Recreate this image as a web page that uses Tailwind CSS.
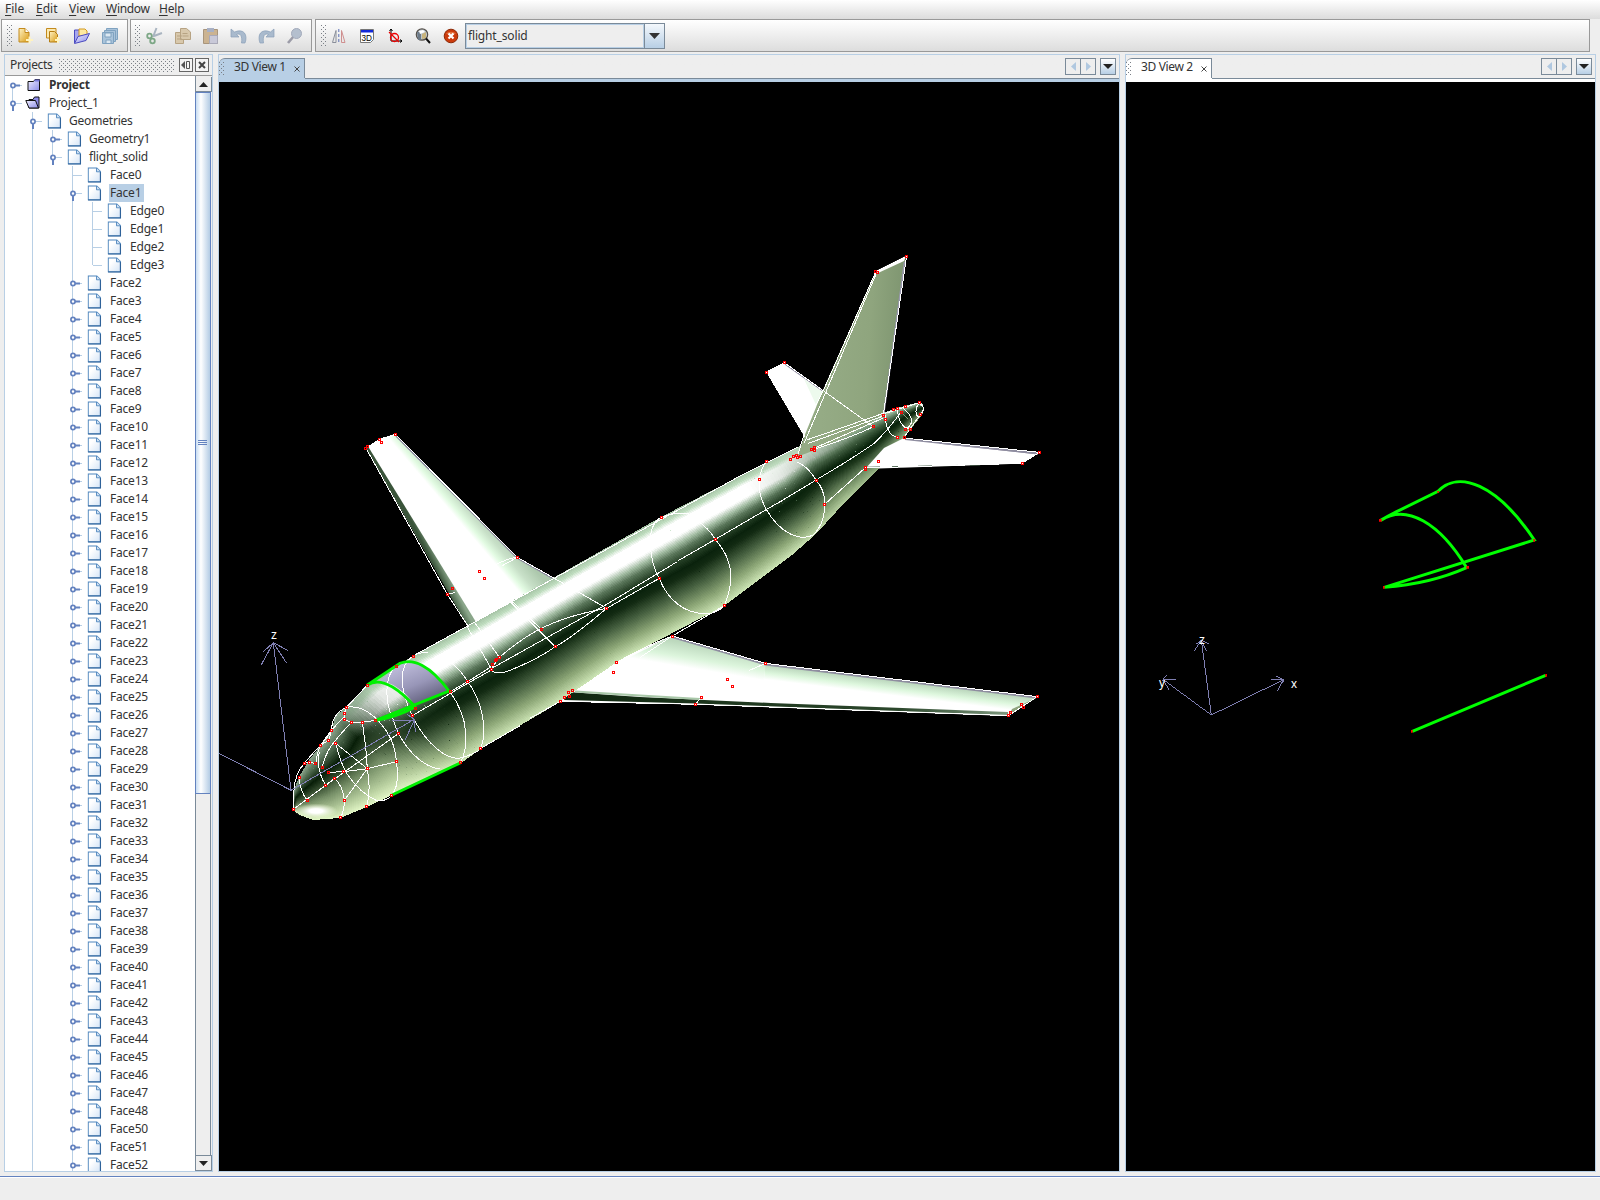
<!DOCTYPE html>
<html lang="en">
<head>
<meta charset="utf-8">
<title>flight_solid</title>
<script src="https://cdn.jsdelivr.net/npm/@tailwindcss/browser@4"></script>
</head>
<body class="w-[1600px] h-[1200px] overflow-hidden bg-[#eeeeee] font-['Noto_Sans',sans-serif] text-[12px] leading-[18px] text-[#333333] flex flex-col">
<svg width="0" height="0" class="absolute">
  <defs>
    <pattern id="dots" width="4" height="4" patternUnits="userSpaceOnUse"><path d="M0 0h1v1H0zM2 2h1v1H2z" fill="#7a7f86"/></pattern>
    <linearGradient id="pg" x1="0" y1="0" x2="1" y2="1"><stop offset=".3" stop-color="#fff"/><stop offset="1" stop-color="#d4e4f6"/></linearGradient>
    <linearGradient id="gold" x1="0" y1="0" x2="1" y2="1"><stop offset="0" stop-color="#fff3c4"/><stop offset="1" stop-color="#d99a12"/></linearGradient>
    <linearGradient id="fold" x1="0" y1="0" x2="1" y2="1"><stop offset="0" stop-color="#f0f0ff"/><stop offset="1" stop-color="#8a8ae8"/></linearGradient>
    <symbol id="page" viewBox="0 0 14 16"><path d="M.7 1h8.600l3.600 3.600v10.200H.7z" fill="url(#pg)" stroke="#4f86bd" stroke-width="1.100"/><path d="M.6 15h12.400V5" fill="none" stroke="#2f6299" stroke-width="1.100"/><path d="M9 1v3.800h4" fill="#cfe0f2" stroke="#4f86bd" stroke-width=".9"/></symbol>
    <symbol id="closed" viewBox="0 0 14 14"><path d="M1 3.500h5.500l1.500-2h4.500v11H1z" fill="url(#fold)" stroke="#111" /><path d="M7.500 1.500h5v2h-5z" fill="#7474d8"/></symbol>
    <symbol id="open" viewBox="0 0 16 14"><path d="M4 3.500h4l1.500-2.500h4.500v11H4z" fill="#8a8ae8" stroke="#111"/><path d="M.8 4.500h9.700l3 7.500H4z" fill="url(#fold)" stroke="#111"/></symbol>
  </defs>
</svg>

<nav class="h-[19px] shrink-0 flex items-start pl-[5px] bg-linear-to-b from-white to-[#dcdcdc]">
  <span class="w-[31px]"><u class="underline-offset-2">F</u>ile</span>
  <span class="w-[33px]"><u class="underline-offset-2">E</u>dit</span>
  <span class="w-[37px]"><u class="underline-offset-2">V</u>iew</span>
  <span class="w-[53px] tracking-[-.3px]"><u class="underline-offset-2">W</u>indow</span>
  <span class="tracking-[-.2px]"><u class="underline-offset-2">H</u>elp</span>
</nav>

<div class="h-[33px] shrink-0 flex gap-[3px] pl-px">
  <div class="w-[127px] border border-[#999] bg-linear-to-b from-white to-[#dddddd] flex items-center pl-[5px]">
    <svg width="6" height="22"><rect width="6" height="22" fill="url(#dots)"/></svg>
    <div class="flex items-center gap-[11px] pl-[4px]">
      <svg width="17" height="18" viewBox="0 0 17 18"><path d="M2 1.500h6l4 4V15H2z" fill="url(#gold)" stroke="#c38a1c"/><path d="M8 1.500v4h4" fill="#fff" stroke="#c38a1c"/><path d="M12.500 9.500v7M9 13h7" stroke="#fff3c0" stroke-width="2"/></svg>
      <svg width="17" height="18" viewBox="0 0 17 18"><path d="M1.500 1.500H11V11H1.500z" fill="#fbe9b0" stroke="#c38a1c"/><path d="M4.500 4.500h5l3 3V15h-8z" fill="url(#gold)" stroke="#b57d12"/><path d="M13 10v6M10 13h6" stroke="#fff3c0" stroke-width="2"/></svg>
      <svg width="17" height="18" viewBox="0 0 17 18"><path d="M1.500 16V3h5l1 2h3v5" fill="#a6a6ee" stroke="#4a4ac0"/><path d="M6 9V2h6l2 2v5z" fill="#ffe9a0" stroke="#d39a20"/><path d="M1.500 16.500 5 9.500l11.500-3-3.500 7z" fill="url(#fold)" stroke="#4a4ac0"/></svg>
      <svg width="17" height="18" viewBox="0 0 17 18" fill="#a9c3da" stroke="#7fa2c0"><path d="M5.500 1.500h11v11h-11z"/><path d="M3.500 3.500h11v11h-11z"/><path d="M1.500 5.500h11v11h-11z"/><path d="M4 6h6v4H4zM5 13h5v3.500H5z" fill="#dce8f2"/></svg>
    </div>
  </div>
  <div class="w-[182px] -ml-px border border-[#999] bg-linear-to-b from-white to-[#dddddd] flex items-center pl-[4px]">
    <svg width="6" height="22"><rect width="6" height="22" fill="url(#dots)"/></svg>
    <div class="flex items-center gap-[11px] pl-[5px]">
      <svg width="17" height="18" viewBox="0 0 17 18" fill="none"><path d="M8 9 16 6M7 10 10.500 1" stroke="#a9b4c0" stroke-width="2"/><circle cx="3.500" cy="9" r="2.300" stroke="#7da786" stroke-width="1.800"/><circle cx="6.500" cy="14" r="2.300" stroke="#7da786" stroke-width="1.800"/></svg>
      <svg width="17" height="18" viewBox="0 0 17 18" stroke="#b7a383" fill="#d8c8ac"><path d="M1.500 5.500h8v11h-8z"/><path d="M6.500 1.500h6l4 3.500v7.500h-10z"/><path d="M3 9h5M3 12h5M8.500 6.500h5M8.500 9h6"/></svg>
      <svg width="17" height="18" viewBox="0 0 17 18"><path d="M1.500 2.500h14v14h-14z" fill="#cbb391" stroke="#a8957c"/><path d="M5 1h7v4H5z" fill="#a8b0c4"/><path d="M7.500 8.500h8v8h-8z" fill="#c9c9d8" stroke="#a9a9b8"/></svg>
      <svg width="17" height="18" viewBox="0 0 17 18"><path d="M1 2v8h8L6.500 7.500c4-2 6 2 5 8.500h3.500c3-8-1-15-10.500-11z" fill="#a9bacd" stroke="#8a9fb8" stroke-width=".7"/></svg>
      <svg width="17" height="18" viewBox="0 0 17 18"><path d="M16 2v8H8l2.500-2.500c-4-2-6 2-5 8.500H2C-1 8 3 1 12.500 5z" fill="#a9bacd" stroke="#8a9fb8" stroke-width=".7"/></svg>
      <svg width="17" height="18" viewBox="0 0 17 18"><path d="M7.500 9.500 2 16" stroke="#9c9ca8" stroke-width="2.600"/><circle cx="10.500" cy="6.500" r="5" fill="#b4bfce" stroke="#a3aabb"/></svg>
    </div>
  </div>
  <div class="w-[1275px] border border-[#999] bg-linear-to-b from-white to-[#dddddd] flex items-center pl-[5px]">
    <svg width="6" height="22"><rect width="6" height="22" fill="url(#dots)"/></svg>
    <div class="flex items-center gap-[12px] pl-[4px]">
      <svg width="16" height="16" viewBox="0 0 16 16" fill="none"><path d="M1.500 14.500h3.500v-12z" stroke="#8a8f9a"/><path d="M14 14.500h-3.500v-12z" stroke="#cf8f8f"/><path d="M7.800 1v15" stroke="#5b6fb5" stroke-dasharray="3 2"/></svg>
      <svg width="16" height="16" viewBox="0 0 16 16"><path d="M1.500 1.500h13v10l-3 3h-10z" fill="#fff" stroke="#777"/><path d="M2 2h12v2.500H2z" fill="#1228d8"/><text x="2.500" y="12.500" font-size="9.500" font-family="Liberation Sans" fill="#000" textLength="10.500" lengthAdjust="spacingAndGlyphs">3D</text></svg>
      <svg width="16" height="16" viewBox="0 0 16 16" fill="none"><path d="M4 1v12h11M2.500 3 4 1l1.500 2M13 11.500l2 1.500-2 1.500" stroke="#000"/><circle cx="7.500" cy="9.500" r="4" stroke="#e00" stroke-width="1.300"/><path d="M2 4l10 10" stroke="#e00" stroke-width="1.300"/></svg>
      <svg width="16" height="16" viewBox="0 0 16 16"><circle cx="7" cy="6.500" r="5.700" fill="#bcc6cf" stroke="#55504a" stroke-width="1.200"/><path d="M2 4h4v8H3z" fill="#6c7a88"/><path d="M7 6l4-2v6l-4 1z" fill="#c9b47c"/><path d="M4 3l4-1 2 2-5 2z" fill="#fff"/><path d="M11 10.500l4 4.500" stroke="#111" stroke-width="2"/></svg>
      <svg width="16" height="16" viewBox="0 0 16 16"><circle cx="8" cy="8" r="6.800" fill="#cc3b0c" stroke="#8c2a08"/><path d="M3 6a5.500 4 0 0 1 10 0z" fill="#e2703c"/><path d="M5.500 5.500l5 5m0-5-5 5" stroke="#fff" stroke-width="2.200"/></svg>
    </div>
    <div class="ml-[6px] w-[200px] h-[26px] border border-[#7a8a99] flex">
      <div class="flex-1 border border-[#b8cfe5] bg-[#eeeeee] pl-[1px] leading-[22px] tracking-[-.15px]">flight_solid</div>
      <div class="w-[20px] border-l border-[#7a8a99] bg-linear-to-b from-[#f4f8fc] to-[#b8cfe5] flex items-center justify-center"><svg width="11" height="6"><path d="M0 0h11L5.500 6z" fill="#333"/></svg></div>
    </div>
  </div>
</div>

<main class="h-[1118px] mt-[2px] pl-[4px] flex shrink-0">
  <section class="w-[209px] border border-[#b8cfe5] bg-white flex flex-col">
    <header class="h-[21px] shrink-0 bg-[#eeeeee] border-b border-[#999] flex items-center pl-[5px]">
      <span class="w-[49px] tracking-[-.3px]">Projects</span>
      <svg width="115" height="13"><rect width="115" height="13" fill="url(#dots)"/></svg>
      <svg class="ml-[5px]" width="14" height="14"><rect x=".5" y=".5" width="13" height="13" fill="#f4f4f4" stroke="#666"/><path d="M6 3v8L2 7z" fill="#555"/><path d="M7.500 3.500h3v7h-3z" fill="none" stroke="#555"/></svg>
      <svg class="ml-[2px]" width="14" height="14"><rect x=".5" y=".5" width="13" height="13" fill="#f4f4f4" stroke="#666"/><path d="M4 4l6 6m0-6-6 6" stroke="#444" stroke-width="2"/></svg>
    </header>
    <div class="flex-1 min-h-0 flex">
      <div id="tree" class="flex-1 min-w-0 overflow-hidden"></div>
      <div class="w-[17px] pt-[1px] flex flex-col border-l border-[#7a8a99] bg-[#eeeeee]">
        <div class="h-[15px] border-b border-r border-[#7a8a99] flex items-center justify-center"><svg width="9" height="5"><path d="M0 5h9L4.500 0z" fill="#222"/></svg></div>
        <div class="h-[702px] -ml-px mr-px border border-[#6382bf] bg-linear-to-r from-[#c8ddf2] via-white via-35% to-[#b4cce4] flex items-center justify-center"><svg width="10" height="6"><path d="M0 .5h9M0 2.500h9M0 4.500h9" stroke="#6382bf"/></svg></div>
        <div class="flex-1 mr-px border-r border-[#7a8a99]"></div>
        <div class="h-[16px] border border-l-0 border-[#7a8a99] flex items-center justify-center"><svg width="9" height="5"><path d="M0 0h9L4.500 5z" fill="#222"/></svg></div>
      </div>
    </div>
  </section>

  <section class="ml-[5px] w-[902px] border border-[#b8cfe5] flex flex-col">
    <div class="h-[27px] shrink-0 bg-linear-to-t from-[#b8cfe5] from-0% via-[#b8cfe5] via-[15%] to-[#eeeeee] to-[15%] flex items-start">
      <div class="mt-[3px] w-[86px] h-[20px] bg-[#b8cfe5] border-t border-r border-[#7a8a99] rounded-tl-[6px] flex items-center">
        <svg width="6" height="14"><rect width="6" height="14" fill="url(#dots)"/></svg>
        <span class="ml-[9px] -mt-[3px] w-[60px] tracking-[-.35px]">3D View 1</span><svg width="6" height="6"><path d="M.5 .5l5 5m0-5-5 5" stroke="#444"/></svg>
      </div>
      <div class="flex-1 h-[24px] border-b border-[#7a8a99] flex justify-end pt-[3px] pr-[3px]">
        <div class="w-[31px] h-[17px] border border-[#7a8a99] flex"><div class="flex-1 border-r border-[#7a8a99] flex items-center justify-center"><svg width="5" height="9"><path d="M5 0v9L0 4.500z" fill="#b0c8e0"/></svg></div><div class="flex-1 flex items-center justify-center"><svg width="5" height="9"><path d="M0 0v9l5-4.500z" fill="#b0c8e0"/></svg></div></div>
        <div class="ml-[4px] w-[16px] h-[17px] border border-[#7a8a99] bg-linear-to-b from-white to-[#b8cfe5] flex items-center justify-center"><svg width="10" height="5"><path d="M0 0h10L5 5z" fill="#222"/></svg></div>
      </div>
    </div>
    <svg id="plane" class="block bg-black" width="900" height="1089" viewBox="219 82 900 1089">
      <defs>
        <linearGradient id="wl" gradientUnits="userSpaceOnUse" x1="461" y1="483" x2="441" y2="500"><stop offset="0" stop-color="#adc8ad"/><stop offset=".5" stop-color="#c8e0c8"/><stop offset=".8" stop-color="#e2fbe2"/><stop offset="1" stop-color="#fff"/></linearGradient>
        <linearGradient id="wls" gradientUnits="userSpaceOnUse" x1="420" y1="538" x2="428" y2="534"><stop offset="0" stop-color="#3a543a"/><stop offset="1" stop-color="#8aa68a"/></linearGradient>
        <linearGradient id="wr" gradientUnits="userSpaceOnUse" x1="860" y1="675" x2="858" y2="691"><stop offset="0" stop-color="#b4d0b6"/><stop offset=".6" stop-color="#ddf7dd"/><stop offset="1" stop-color="#fff"/></linearGradient>
        <linearGradient id="wr2" gradientUnits="userSpaceOnUse" x1="718" y1="648" x2="714" y2="672"><stop offset="0" stop-color="#bcd8bd"/><stop offset=".6" stop-color="#dcf5dc"/><stop offset="1" stop-color="#fff"/></linearGradient>
        <linearGradient id="fin" x1="0" y1="0" x2="1" y2=".1"><stop offset=".3" stop-color="#95ab85"/><stop offset=".7" stop-color="#8fa57e"/><stop offset="1" stop-color="#7e9570"/></linearGradient>
        <linearGradient id="glass" x1=".2" y1=".1" x2=".8" y2="1"><stop offset="0" stop-color="#c0bedc"/><stop offset=".5" stop-color="#9896b8"/><stop offset="1" stop-color="#55536e"/></linearGradient>
        <radialGradient id="tip"><stop offset=".3" stop-color="#fff"/><stop offset="1" stop-color="#f4ffdc" stop-opacity="0"/></radialGradient>
        <linearGradient id="under" x1="0" y1="0" x2="1" y2="0"><stop offset="0" stop-color="#0f260f"/><stop offset=".75" stop-color="#2c472c"/><stop offset="1" stop-color="#7d977d"/></linearGradient>
      </defs>
      <!-- port wing -->
      <path d="M366 448 379 439.500 395 434 517 557 555 579 560 620 480 640 468 626z" fill="url(#wl)"/>
      <path d="M366 448 369 448 476 622 468 627z" fill="url(#wls)"/>
      <path d="M396 436 517 558 554 579" fill="none" stroke="#8a889c" stroke-width="1.500"/>
      <!-- port tailplane -->
      <path d="M766.500 372 784 363 830 396 815 450 803 434z" fill="#fff"/><path d="M804 379 824 393 817 407z" fill="#edfaed"/>
      <path d="M785 364 823 391" stroke="#8a889c" stroke-width="1.500"/>
      <!-- starboard wing -->
      <path d="M672 636 765.500 663.500 1037 697 1008 716 695 704.500 560 701.500 573 688 617 660z" fill="#fff"/>
      <path d="M672 636 766 663.500 762 690 620 690 600 672z" fill="url(#wr2)"/>
      <path d="M765.500 663.500 1037 697 1010 714 762 700z" fill="url(#wr)"/>
      <path d="M568 692 640 697 771 703 1008 712 1008 715 695 703.500 564 700z" fill="url(#under)"/>
      <path d="M575 691.500 640 695.500 700 699" fill="none" stroke="#a9c8a9" stroke-width="2"/>
      <path d="M672 637 765.500 664.500 1036 697.500" fill="none" stroke="#8f8da0" stroke-width="2"/>
      <path d="M1036 698 1009 715 1012 709z" fill="#8fa57e"/>
      <!-- starboard tailplane -->
      <path d="M904 438 1039 452.500 1022 463.500 864 469 880 446z" fill="#fff"/>
      <path d="M905 439 1038 453.500" stroke="#8f8da0" stroke-width="2"/>
      <g id="hull" shape-rendering="crispEdges"></g>
      <path d="M884 448 904 438 940 442 930 466 866 468z" fill="#fff"/>
      <path d="M905 439 1038 453.500" stroke="#8f8da0" stroke-width="2"/><path d="M866 467.300 980 465" stroke="#35503a" stroke-dasharray="14 12"/>
      <ellipse cx="316" cy="811" rx="22" ry="7.500" fill="url(#tip)"/>
      <path d="M797 457 804 437 823 390 875.500 272 906 257 884 413C860 432 830 444 797 457z" fill="url(#fin)"/>
      <path d="M876 271 906 256 904 261 878 273z" fill="#fff"/><path d="M904.500 262 884 412" stroke="#9a98b0" stroke-width="1.500"/>
      <path transform="translate(280 620) scale(.33333)" d="M300 183 360 130C400 115 450 135 507 213L405 252C375 215 335 185 300 183z" fill="url(#glass)"/>
      <g fill="none" stroke="#fff" shape-rendering="crispEdges" id="wires">
        <path d="M413 656 740 476 798 447"/>
        <path vector-effect="non-scaling-stroke" transform="translate(280 620) scale(.33333)" d="M199 262C270 250 345 340 349 425C356 470 352 505 335 526 M199 262 193 281 193 298 214 307 247 307 285 301 M247 307 257 380 262 446C270 490 268 530 260 560 M349 425 262 446 190 455 146 457 M355 341 137 496 40 568 164 475 M167 370 262 446 193 541 M167 370Q180 425 200 460Q240 520 290 542Q320 545 335 526 M164 475Q190 500 193 541Q193 575 181 593 M214 307Q160 365 146 390Q130 420 127 442 M262 195Q225 235 199 262C160 280 155 310 155 330Q150 345 122 375Q80 420 73 430Q45 460 42 510L40 568 M193 290Q150 330 120 380Q110 400 108 430 M73 430 88 427 106 430 M118 395Q108 450 137 496 M57 470Q62 520 82 541 M155 330 146 362 122 375 M350 135C310 170 315 250 340 300C360 370 420 440 480 447 M400 108Q350 140 375 230Q385 265 400 295C440 370 500 425 545 413Q590 400 601 386 M510 215C570 300 565 380 542 428 M400 108Q420 95 445 98 M500 118Q540 145 563 185C605 240 625 330 601 386 M400 285 563 190 634 150 M510 215 563 185 634 140 M335 526 542 428 M601 386 720 317"/>
        <path vector-effect="non-scaling-stroke" transform="translate(340 410) scale(.33333)" d="M78 115 322 553 385 650 M78 115 118 88 166 73 532 442 643 505 M125 95 166 73 M455 775 800 583 1010 456 M800 595 958 505 M455 775 478 742C530 700 600 630 800 595 M455 778Q460 795 500 785Q590 750 646 710Q700 680 800 595 M643 505 800 595 M518 576 604 658 M513 578 646 710 M380 648 455 778 M403 636 478 742 M532 442Q500 445 460 468 M532 442 485 468 M322 553 345 548"/>
        <path vector-effect="non-scaling-stroke" transform="translate(530 500) scale(.34444 .33333)" d="M381 52C330 80 350 190 375 235C400 300 450 345 520 341Q550 335 564 317C595 240 590 180 538 118Q520 85 480 58 M381 52Q420 35 460 42 M430 182 538 118 684 30 735 0 M413 408 684 490 1473 590 1389 647 M88 604 480 613 1389 647 M413 408 320 472 M684 490 635 512 M480 613 498 592 M413 408Q330 440 252 487 M0 655 88 604 M564 317 413 408"/>
        <path vector-effect="non-scaling-stroke" transform="translate(740 240) scale(.33333)" d="M80 663C50 700 50 760 80 810C120 880 180 905 220 885Q255 850 254 793Q255 750 228 720Q205 680 170 665 M129 780 228 720Q330 660 400 612Q450 565 485 512 M254 793 375 684 M436 525C435 570 455 590 473 592 M472 505C475 545 490 565 510 567 M485 500C520 530 525 550 497 567 M538 488C520 510 530 540 540 525Q555 510 548 498L538 488 M436 520 538 488 M492 592 540 525 M407 96 250 452 205 540 172 650 M410 98 192 610 M500 48 430 525 M407 96 500 48 M80 396 195 590 M80 396 133 368 400 560 M200 600 430 520 M205 610 430 528 M215 628 430 534 M222 628Q340 590 400 560 M492 594 898 637 846 670 375 684"/>
      </g>
      <g fill="none" stroke="#00f000" stroke-width="2.800">
        <path d="M367.300 685 400 663.300C413 658 430 665 449 691L375.700 720.300M367.300 685C383 675 403 693 415 707Q397 717 375.700 720.300M392 795 460.700 762.700"/>
      </g>
      <path fill="none" stroke="#7f7fb2" shape-rendering="crispEdges" d="M291 790.300 273.300 642.700M261.300 664.700 273.300 642.700 286.700 663.300M263.300 651.700 273.300 642.700 287.700 650.300M291 790.300 219 753.300M291 790.300 414.300 719.300M392.300 720.300H414.300L405 740M415.300 731.700 414.300 719.300 406.700 714"/>
      <text x="271" y="639" class="font-['Liberation_Sans']" font-size="12" fill="#fff">z</text>
      <g id="pts" fill="#f00" shape-rendering="crispEdges"></g>
    </svg>
  </section>

  <section class="ml-[5px] w-[471px] border border-[#b8cfe5] flex flex-col">
    <div class="h-[27px] shrink-0 bg-linear-to-t from-white from-0% via-white via-[15%] to-[#eeeeee] to-[15%] flex items-start">
      <div class="mt-[3px] w-[86px] h-[20px] bg-white border-t border-r border-[#7a8a99] rounded-tl-[6px] flex items-center">
        <svg width="6" height="14"><rect width="6" height="14" fill="url(#dots)"/></svg>
        <span class="ml-[9px] -mt-[3px] w-[60px] tracking-[-.35px]">3D View 2</span><svg width="6" height="6"><path d="M.5 .5l5 5m0-5-5 5" stroke="#444"/></svg>
      </div>
      <div class="flex-1 h-[24px] border-b border-[#7a8a99] flex justify-end pt-[3px] pr-[3px]">
        <div class="w-[31px] h-[17px] border border-[#7a8a99] flex"><div class="flex-1 border-r border-[#7a8a99] flex items-center justify-center"><svg width="5" height="9"><path d="M5 0v9L0 4.500z" fill="#b0c8e0"/></svg></div><div class="flex-1 flex items-center justify-center"><svg width="5" height="9"><path d="M0 0v9l5-4.500z" fill="#b0c8e0"/></svg></div></div>
        <div class="ml-[4px] w-[16px] h-[17px] border border-[#7a8a99] bg-linear-to-b from-white to-[#b8cfe5] flex items-center justify-center"><svg width="10" height="5"><path d="M0 0h10L5 5z" fill="#222"/></svg></div>
      </div>
    </div>
    <svg class="block bg-black" width="469" height="1089" viewBox="1126 82 469 1089">
      <g transform="translate(1130 460) scale(.33333)" fill="none">
        <path stroke="#0f0" stroke-width="9" d="M752 181Q775 168 800 155L924 94C985 30 1100 70 1213 240L763 382Q900 372 1010 323M752 181C830 130 930 190 1010 323M847 814 1247 646"/>
        <path stroke="#7f7fb2" stroke-width="3" shape-rendering="crispEdges" d="M244 765 214 541M193 572 214 541 230 574M198 553 214 541 236 551M244 765 100 659M138 658H100L116 689M110 645 97 662M244 765 461 659M423 658H461L443 692M438 649 461 659 458 668"/>
        <path fill="#f00" d="M747 177h8v8h-8zM1009 318h8v8h-8zM1210 237h5v8h-5zM759 378h5v8h-5zM922 93h5v5h-5zM843 810h5v8h-5zM1246 642h5v8h-5z"/>
      </g>
      <g class="font-['Liberation_Sans']" font-size="12" fill="#fff"><text x="1199" y="644">z</text><text x="1159" y="687">y</text><text x="1291" y="688">x</text></g>
    </svg>
  </section>
</main>
<footer class="mt-[4px] flex-1 border-t border-[#6382bf]"><div class="border-t border-white"></div></footer>

<script>
// Rows of the project tree: label, depth, node state ('c' closed, 'o' open, '' leaf)
const rows = [['Project',0,'c'],['Project_1',0,'o'],['Geometries',1,'o'],['Geometry1',2,'c'],['flight_solid',2,'o'],['Face0',3,''],['Face1',3,'o'],['Edge0',4,''],['Edge1',4,''],['Edge2',4,''],['Edge3',4,'']];
for (let i = 2; i <= 52; i++) if (i !== 49) rows.push(['Face' + i, 3, 'c']);
const textX = [44, 64, 84, 104, 124];
document.getElementById('tree').innerHTML = rows.map(([name, d, st], i) => {
  let g = '';
  const line = (l, a, b) => g += `<path d="M${7.5 + 20 * l} ${a}V${b}" stroke="#b8cfe5"/>`;
  if (i === 0) line(0, 9, 18);
  if (i === 1) line(0, 0, 9);
  if (i >= 2) line(1, 0, 18);
  if (i === 3) line(2, 0, 18);
  if (i === 4) line(2, 0, 9);
  if (i >= 5) line(3, 0, 18);
  if (d === 4) line(4, 0, i === 10 ? 9 : 18);
  const x = 8 + 20 * d;
  g += `<path d="M${x} 9.500h9" stroke="#b8cfe5"/>`;
  if (st) g += `<path d="${st === 'c' ? `M${x} 9.500h7` : `M${x} 9v8`}" stroke="#6382bf" stroke-width="2"/><circle cx="${x}" cy="9.500" r="2.100" fill="#fff" stroke="#6382bf" stroke-width="1.700"/>`;
  const ix = 22.5 + 20 * d;
  g += i === 0 ? `<use href="#closed" x="22" y="2" width="14" height="14"/>` : i === 1 ? `<use href="#open" x="20" y="2" width="16" height="14"/>` : `<use href="#page" x="${ix}" y="1" width="14" height="16"/>`;
  return `<div class="h-[18px] flex"><svg class="shrink-0" width="${textX[d]}" height="18">${g}</svg><span class="tracking-[-.2px] whitespace-nowrap ${name === 'Face1' ? 'bg-[#b8cfe5] pl-px pr-[3px]' : d > 2 ? 'pl-px' : ''} ${i === 0 ? 'font-bold' : ''}">${name}</span></div>`;
}).join('');

// Hull shading: bands between the upper and lower outline at each station
const st = [[293,809,293,810,0],[294,790,300,815,0],[299,777,313,820,0],[309,760,340,818,0],[321,745,367,807,0],[332,730,392,795,0],[335,716,408,788,0],[346,707,425,780,.25],[367,685,461,763,.85],[413,656,485,746,1],[467,626,550,708,1],[553,578,617,662,1],[661,517,724,606,1],[740,476,792,555,1],[773,460,816,534,1.2],[798,447,847,500,1.5],[850,427,880,468,2],[883,413,904,438,2],[897,408,914,425,2],[920,402,922,415,2],[923,405,924,410,2]];
const ramps = [
 [[0,140,165,142],[.12,85,112,85],[.3,8,30,8],[.42,45,68,40],[.62,120,145,105],[.85,185,208,160],[1,228,248,200]],
 [[0,165,195,165],[.05,190,220,190],[.1,255,255,255],[.22,255,255,255],[.29,160,186,160],[.35,90,118,90],[.43,40,66,40],[.51,10,34,12],[.57,18,42,18],[.7,70,96,64],[.86,142,168,120],[1,208,232,184]],
 [[0,205,230,205],[.1,150,180,150],[.3,62,92,62],[.5,8,34,10],[.62,28,54,26],[.8,92,120,84],[1,150,178,130]]];
const at = (r, v) => { let k = 1; while (k < r.length - 1 && r[k][0] < v) k++; const a = r[k-1], b = r[k], t = (v - a[0]) / (b[0] - a[0]); return [1,2,3].map(j => a[j] + (b[j] - a[j]) * t); };
const hue = (m, v) => { const a = Math.min(1, Math.floor(m)), c = at(ramps[a], v), e = at(ramps[a+1], v), t = m - a; return 'rgb(' + c.map((q, j) => Math.round(q + (e[j] - q) * t)).join() + ')'; };
let out = '';
for (let s = 0; s < st.length - 1; s++) {
  const A = st[s], B = st[s+1], parts = A[4] === B[4] ? 1 : 10, N = 80;
  for (let p = 0; p < parts; p++) {
    const mix = t => A.map((q, j) => q + (B[j] - q) * t), a = mix(p / parts), b = mix((p + 1) / parts);
    for (let n = 0; n < N; n++) {
      const v = n / N;
      out += `<path d="M${(a[0]+(a[2]-a[0])*v).toFixed(1)} ${(a[1]+(a[3]-a[1])*v).toFixed(1)}L${(b[0]+(b[2]-b[0])*v).toFixed(1)} ${(b[1]+(b[3]-b[1])*v).toFixed(1)} ${b[2].toFixed(1)} ${b[3].toFixed(1)} ${a[2].toFixed(1)} ${a[3].toFixed(1)}z" fill="${hue((a[4]+b[4])/2, v)}"/>`;
    }
  }
}
document.getElementById('hull').innerHTML = out;

// Vertex markers, grouped by local frame: origin x, origin y, scale x, scale y, points
const marks = [
 [280,620,1/3,1/3,[[40,568],[82,541],[57,472],[73,430],[88,427],[106,430],[127,442],[122,376],[146,362],[155,331],[167,370],[193,281],[193,298],[199,262],[214,307],[247,307],[285,301],[262,196],[400,109],[350,138],[510,215],[563,185],[406,266],[398,287],[355,341],[349,425],[262,446],[190,455],[146,457],[164,475],[137,496],[193,541],[181,593],[260,560],[335,526],[542,428],[601,386],[634,148],[638,133],[645,122],[650,117],[658,112]]],
 [340,410,1/3,1/3,[[77,115],[82,109],[118,88],[125,97],[166,73],[532,442],[418,483],[433,504],[337,536],[322,553],[604,658],[646,710],[800,595],[958,505],[964,322],[470,747]]],
 [530,500,.34444,1/3,[[538,118],[564,317],[413,409],[252,487],[242,517],[684,490],[574,538],[588,559],[498,592],[480,613],[124,571],[112,578],[115,590],[100,593],[88,604],[1473,590],[1428,613],[1432,622],[1395,637],[1389,647]]],
 [740,240,1/3,1/3,[[500,49],[406,95],[412,97],[80,396],[133,368],[400,560],[430,525],[436,538],[460,508],[472,505],[485,517],[497,499],[538,488],[540,523],[497,567],[510,567],[473,592],[492,592],[898,637],[846,669],[415,664],[375,682],[375,688],[80,664],[58,718],[228,720],[254,793],[152,657],[160,649],[170,645],[173,652],[181,650],[215,627],[222,622],[222,630]]]];
document.getElementById('pts').innerHTML = marks.flatMap(([ox, oy, sx, sy, ps]) => ps.map(([x, y]) => `<path d="M${Math.round(ox + x * sx - 1.5)} ${Math.round(oy + y * sy - 1.5)}h3v3h-3zm1 1v1h1v-1z"/>`)).join('');
</script>
</body>
</html>
